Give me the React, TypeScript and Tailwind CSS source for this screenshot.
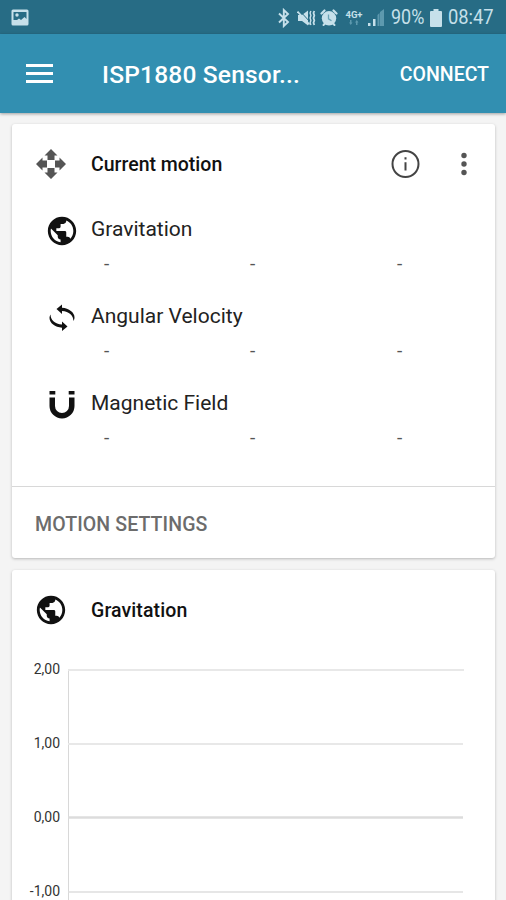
import type { ReactNode } from 'react';
import { MdPublic } from 'react-icons/md';

interface SensorRowProps {
  icon: ReactNode;
  label: string;
}

const axisLabels = ['2,00', '1,00', '0,00', '-1,00'];

const PhotoIcon = () => (
  <svg width="18" height="17" viewBox="0 0 18 17">
    <rect x="0.5" y="0.5" width="17" height="16" rx="1.5" fill="#c6e0ea" />
    <path d="M2.5 3h13v7l-2-2-3.5 3-2-1.5-2 1.5H2.5z" fill="#276c85" />
    <circle cx="6" cy="6" r="1.7" fill="#c6e0ea" />
  </svg>
);

const BluetoothIcon = () => (
  <svg width="20" height="20" viewBox="0 0 20 20" fill="none" stroke="#c6e0ea" strokeWidth="1.9">
    <path d="M5 5.5l9 8.500-4.200 4V2l4.200 4-9 8.500" />
  </svg>
);

const MuteIcon = () => (
  <svg width="19" height="18" viewBox="0 0 19 18" fill="none" stroke="#c6e0ea">
    <path d="M1 6h4l6-4.5v15L5 12H1z" fill="#c6e0ea" stroke="none" />
    <path d="M2.5 1.5l11 12" stroke="#276c85" />
    <path d="M.5 2.5l12 13" strokeWidth="1.8" />
    <path d="M13.9 2l-.8 2 .8 2.500-.8 2.500.8 2.500-.8 2.300.8 2.200" strokeWidth="1.400" />
    <path d="M17.300 2l-.8 2 .8 2.500-.8 2.500.8 2.500-.8 2.300.8 2.200" strokeWidth="1.800" />
  </svg>
);

const AlarmIcon = () => (
  <svg width="18" height="18" viewBox="0 0 18 18">
    <g fill="none" stroke="#c6e0ea" strokeLinecap="round">
      <path d="M1.500 4.500l3-3M16.500 4.500l-3-3" strokeWidth="2.200" />
      <path d="M3.500 16l2-2M14.500 16l-2-2" strokeWidth="2" />
    </g>
    <circle cx="9" cy="9.300" r="7.200" fill="#c6e0ea" />
    <path d="M8.500 5.500v4.300l3 2" fill="none" stroke="#6ba3b6" strokeWidth="1.300" />
  </svg>
);

const DataArrowsIcon = () => (
  <svg width="10" height="5" viewBox="0 0 10 5" fill="#5d99ae">
    <path d="M1 0h1.500v2.500h1L1.750 5 0 2.500h1zM7 5h1.500V2.500h1L7.750 0 6 2.500h1z" />
  </svg>
);

const SignalIcon = () => (
  <svg width="17" height="17" viewBox="0 0 17 17">
    <path d="M0 14h2.500v3H0z" fill="#c6e0ea" />
    <path d="M5 10h2.500v7H5z" fill="#c6e0ea" />
    <path d="M9.500 6l2-2v13h-2zM12 3l4-3v17h-4z" fill="#5d99ae" />
  </svg>
);

const BatteryIcon = () => (
  <svg width="12" height="18" viewBox="0 0 12 18" fill="#c6e0ea">
    <path d="M3.500 0h5v2H11a1 1 0 0 1 1 1v14a1 1 0 0 1-1 1H1a1 1 0 0 1-1-1V3a1 1 0 0 1 1-1h2.500z" />
  </svg>
);

const MoveIcon = () => (
  <svg width="34" height="34" viewBox="-17 -17 34 34" fill="#555">
    <path d="M0-15l6.500 6.500H3.500V-4h-7v-4.500h-3z" />
    <path d="M15 0L8.500 6.500V3.500H4v-7h4.500v-3z" />
    <path d="M0 15l-6.500-6.500h3V4h7v4.500h3z" />
    <path d="M-15 0l6.500-6.500v3H-4v7h-4.500v3z" />
  </svg>
);

const InfoIcon = () => (
  <svg width="30" height="30" viewBox="0 0 30 30">
    <circle cx="15.500" cy="15" r="13" fill="none" stroke="#444" strokeWidth="2" />
    <path d="M14.500 8.300h2v2.200h-2zM14.500 13.300h2v8.200h-2z" fill="#444" />
  </svg>
);

const DotsIcon = () => (
  <svg width="6" height="24" viewBox="0 0 6 24" fill="#555">
    <circle cx="3" cy="3.500" r="2.700" />
    <circle cx="3" cy="12" r="2.700" />
    <circle cx="3" cy="20.500" r="2.700" />
  </svg>
);

const RotateIcon = () => (
  <svg width="28" height="28" viewBox="0 0 28 28" fill="#111">
    <path d="M8.500 5L14 .5v3.300C21 4.300 26.500 8.500 26.500 13.500c0 1.500-.5 2.600-1.200 3.500.7-5-4.300-9.500-11.300-10v3z" />
    <path d="M19.500 22.500L14 27v-3.300C7 23.200 1.500 19 1.500 14c0-1.500.5-2.600 1.200-3.500-.7 5 4.300 9.500 11.300 10v-3z" />
  </svg>
);

const MagnetIcon = () => (
  <svg width="28" height="30" viewBox="0 0 28 30" fill="#111">
    <path d="M1.500 1h5.800v3.500H1.500zM20.700 1h5.800v3.500h-5.800z" />
    <path d="M1.500 7.500h5.500v8.500a7 7 0 0 0 14 0V7.500h5.500V16a12.500 12.500 0 0 1-25 0z" />
  </svg>
);

const SensorRow = ({ icon, label }: SensorRowProps) => (
  <div className="h-[87px]">
    <div className="flex h-[34px] items-center">
      <div className="mr-[14px] flex w-[30px] justify-center pt-[3px]">{icon}</div>
      <span className="pt-[2px] text-[21px]">{label}</span>
    </div>
    <div className="grid h-9 grid-cols-[146px_147px_1fr] items-center pl-[57px] text-[19px] text-[#555]">
      <span>-</span>
      <span>-</span>
      <span>-</span>
    </div>
  </div>
);

const StatusBar = () => (
  <div className="flex h-[34px] shrink-0 items-center bg-[#276c85] pl-[11px] pt-px text-[#c6e0ea]">
    <PhotoIcon />
    <div className="ml-[245px]">
      <BluetoothIcon />
    </div>
    <div className="ml-[3px]">
      <MuteIcon />
    </div>
    <div className="ml-[4px]">
      <AlarmIcon />
    </div>
    <div className="ml-[6px] flex w-[20px] flex-col items-center gap-px text-[9.500px] font-bold leading-[9px]">
      <span>4G+</span>
      <DataArrowsIcon />
    </div>
    <div className="ml-[4px]">
      <SignalIcon />
    </div>
    <span className="ml-[6px] w-[34px] origin-left scale-x-[0.92] whitespace-nowrap pt-px text-[19.500px]">90%</span>
    <div className="ml-[5px]">
      <BatteryIcon />
    </div>
    <span className="ml-[6px] origin-left scale-x-[0.94] pt-px text-[19.500px]">08:47</span>
  </div>
);

const AppBar = () => (
  <header className="flex h-[79px] shrink-0 items-center bg-[#328fb1] pl-[26px] pr-[17px] text-white shadow-[0_1px_3px_rgba(0,0,0,0.35)]">
    <div className="flex w-[27px] flex-col gap-[5px]">
      <div className="h-[3px] bg-white" />
      <div className="h-[3px] bg-white" />
      <div className="h-[3px] bg-white" />
    </div>
    <h1 className="ml-[49px] flex-1 whitespace-nowrap pt-[3px] text-[24.500px] font-medium tracking-[0.2px]">
      ISP1880 Sensor...
    </h1>
    <button className="pt-[3px] text-[19.500px] font-medium">CONNECT</button>
  </header>
);

export default function App() {
  return (
    <div className="flex h-[900px] w-[506px] flex-col overflow-hidden bg-[#f4f4f4] font-['Roboto',sans-serif]">
      <StatusBar />
      <AppBar />

      <main className="flex flex-col gap-3 pl-3 pr-[11px] pt-[11px]">
        <section className="h-[434px] shrink-0 rounded-[3px] bg-white shadow-[0_1px_3px_rgba(0,0,0,0.25)]">
          <div className="flex h-[79px] items-center pl-[22px] pr-[28px] text-[#111]">
            <MoveIcon />
            <h2 className="ml-[23px] flex-1 pt-[3px] text-[19.500px] font-medium">Current motion</h2>
            <InfoIcon />
            <div className="ml-[41px]">
              <DotsIcon />
            </div>
          </div>
          <div className="flex h-[283px] flex-col pl-[35px] pt-[9px] text-[#222]">
            <SensorRow icon={<MdPublic size={34} color="#111" className="shrink-0" />} label="Gravitation" />
            <SensorRow icon={<RotateIcon />} label="Angular Velocity" />
            <SensorRow icon={<MagnetIcon />} label="Magnetic Field" />
          </div>
          <div className="flex h-[72px] items-center border-t border-[#d8d8d8] pl-[23px] pt-[4px] text-[19.500px] font-medium tracking-[0.1px] text-[#6c6c6c]">
            MOTION SETTINGS
          </div>
        </section>

        <section className="h-[400px] shrink-0 rounded-[3px] bg-white shadow-[0_1px_3px_rgba(0,0,0,0.25)]">
          <div className="flex h-[79px] items-center pl-[22px] text-[#111]">
            <MdPublic size={34} />
            <h2 className="ml-[23px] pt-[2px] text-[19.500px] font-medium tracking-[0.1px]">Gravitation</h2>
          </div>
          <div className="flex pt-[13px]">
            <div className="w-[48px] text-right text-[14px] text-[#333]">
              {axisLabels.map((label) => (
                <div key={label} className="h-[74px] leading-[14px]">
                  {label}
                </div>
              ))}
            </div>
            <svg className="ml-[7px] mt-[6px]" width="397" height="300" viewBox="0 0 397 300" fill="none">
              <path d="M1.500 1v299" stroke="#d8d8d8" />
              <path d="M1 2h396M1 76h395" stroke="#e8e8e8" strokeWidth="2" />
              <path d="M1 149.500h395" stroke="#dcdcdc" strokeWidth="2.500" />
              <path d="M1 224h395" stroke="#dedede" strokeWidth="1.500" />
            </svg>
          </div>
        </section>
      </main>
    </div>
  );
}
